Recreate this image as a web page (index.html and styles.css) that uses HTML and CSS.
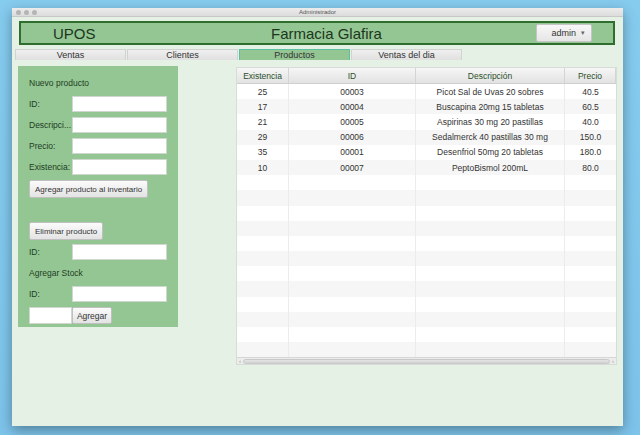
FILE: index.html
```html
<!DOCTYPE html>
<html>
<head>
<meta charset="utf-8">
<link rel="stylesheet" href="styles.css">
</head>
<body>
<div class="window">
  <div class="titlebar">
    <div class="dots"><span></span><span></span><span></span></div>
    <div class="title">Administrador</div>
  </div>
  <div class="content">
    <div class="header">
      <div class="brand">UPOS</div>
      <div class="store">Farmacia Glafira</div>
      <div class="user">admin <span class="caret">▾</span></div>
    </div>
    <div class="tabs">
      <div class="tab">Ventas</div>
      <div class="tab">Clientes</div>
      <div class="tab active">Productos</div>
      <div class="tab">Ventas del dia</div>
    </div>
    <div class="main">
      <div class="panel">
        <div class="section-title">Nuevo producto</div>
        <div class="field first"><span class="label">ID:</span><span class="input"></span></div>
        <div class="field"><span class="label">Descripci...</span><span class="input"></span></div>
        <div class="field"><span class="label">Precio:</span><span class="input"></span></div>
        <div class="field"><span class="label">Existencia:</span><span class="input"></span></div>
        <div class="btn add-btn">Agregar producto al inventario</div>
        <div class="btn del-btn">Eliminar producto</div>
        <div class="field tight"><span class="label">ID:</span><span class="input"></span></div>
        <div class="section-title stock">Agregar Stock</div>
        <div class="field stock-id"><span class="label">ID:</span><span class="input"></span></div>
        <div class="qty-row"><span class="input qty"></span><span class="btn small">Agregar</span></div>
      </div>
      <div class="table-wrap">
        <div class="table">
          <div class="row head"><div>Existencia</div><div>ID</div><div>Descripción</div><div>Precio</div></div>
          <div class="row"><div>25</div><div>00003</div><div>Picot Sal de Uvas 20 sobres</div><div>40.5</div></div>
          <div class="row"><div>17</div><div>00004</div><div>Buscapina 20mg 15 tabletas</div><div>60.5</div></div>
          <div class="row"><div>21</div><div>00005</div><div>Aspirinas 30 mg 20 pastillas</div><div>40.0</div></div>
          <div class="row"><div>29</div><div>00006</div><div>Sedalmerck 40 pastillas 30 mg</div><div>150.0</div></div>
          <div class="row"><div>35</div><div>00001</div><div>Desenfriol 50mg 20 tabletas</div><div>180.0</div></div>
          <div class="row"><div>10</div><div>00007</div><div>PeptoBismol 200mL</div><div>80.0</div></div>
          <div class="row"><div></div><div></div><div></div><div></div></div>
          <div class="row"><div></div><div></div><div></div><div></div></div>
          <div class="row"><div></div><div></div><div></div><div></div></div>
          <div class="row"><div></div><div></div><div></div><div></div></div>
          <div class="row"><div></div><div></div><div></div><div></div></div>
          <div class="row"><div></div><div></div><div></div><div></div></div>
          <div class="row"><div></div><div></div><div></div><div></div></div>
          <div class="row"><div></div><div></div><div></div><div></div></div>
          <div class="row"><div></div><div></div><div></div><div></div></div>
          <div class="row"><div></div><div></div><div></div><div></div></div>
          <div class="row"><div></div><div></div><div></div><div></div></div>
          <div class="row"><div></div><div></div><div></div><div></div></div>
        </div>
        <div class="hscroll"><span class="arr">‹</span><span class="thumb"></span><span class="arr">›</span></div>
      </div>
    </div>
  </div>
</div>
</body>
</html>
```
FILE: styles.css
```css
* { box-sizing: border-box; }
html, body { margin: 0; height: 100%; }
body {
  background: linear-gradient(180deg, #86ccef 0%, #7dc3ea 100%);
  padding: 8px 17px 9px 12px;
  font-family: "Liberation Sans", Arial, sans-serif;
  color: #333;
}
.window {
  width: 611px;
  height: 418px;
  background: #e6f1e6;
  display: flex;
  flex-direction: column;
  box-shadow: 0 4px 12px rgba(0,0,0,0.35);
}
.titlebar {
  height: 9px;
  background: linear-gradient(#ececec, #dcdcdc);
  border-bottom: 1px solid #c8c8c8;
  position: relative;
  display: flex;
  align-items: center;
  justify-content: center;
}
.dots {
  position: absolute;
  left: 4px;
  top: 2px;
  display: flex;
  gap: 3px;
}
.dots span {
  width: 5px; height: 5px; border-radius: 50%;
  background: #b5b5b5;
}
.title { font-size: 6px; color: #555; }
.content {
  flex: 1;
  display: flex;
  flex-direction: column;
  padding: 4px 0 0 3px;
}
.header {
  margin: 0 8px 0 4px;
  height: 24px;
  background: #93c693;
  border: 2px solid #2f6e2f;
  display: flex;
  align-items: center;
  color: #1d351d;
  font-size: 15px;
}
.brand { width: 250px; padding-left: 32px; }
.store { flex: 1; }
.user {
  width: 56px;
  height: 18px;
  margin-right: 21px;
  background: linear-gradient(#f7f7f7, #e6e6e6);
  border: 1px solid #c5c5c5;
  border-radius: 2px;
  font-size: 9px;
  color: #333;
  display: flex;
  align-items: center;
  justify-content: flex-end;
  padding-right: 6px;
  gap: 5px;
}
.caret { font-size: 7px; color: #666; }
.tabs {
  display: flex;
  margin-top: 4px;
  height: 11px;
}
.tab {
  width: 111px;
  margin-right: 1px;
  background: linear-gradient(#efefef, #e0e0e0);
  border: 1px solid #d2d2d2;
  border-bottom: none;
  font-size: 9px;
  color: #333;
  display: flex;
  align-items: center;
  justify-content: center;
  line-height: 1;
}
.tab.active {
  background: #93c693;
  border: 1px solid #5bbfa0;
  border-bottom: none;
}
.main {
  display: flex;
  align-items: flex-start;
  margin-top: 6px;
  padding-left: 3px;
}
.panel {
  width: 160px;
  height: 261px;
  background: #93c693;
  padding: 11px 0 0 11px;
  font-size: 8.5px;
  color: #1f3d1f;
  display: flex;
  flex-direction: column;
}
.section-title { height: 12px; line-height: 12px; }
.field { display: flex; align-items: center; margin-top: 5px; height: 16px; }
.field.first { margin-top: 7px; }
.label { width: 43px; white-space: nowrap; overflow: hidden; }
.input {
  width: 95px; height: 16px;
  background: #fff;
  border: 1px solid #cfd8cf;
  display: inline-block;
}
.btn {
  background: linear-gradient(#fbfbfb, #e3e3e3);
  border: 1px solid #c0c0c0;
  border-radius: 2px;
  color: #333;
  height: 18px;
  display: flex;
  align-items: center;
  justify-content: center;
  align-self: flex-start;
  padding: 0 5px;
  white-space: nowrap;
  font-size: 8px;
}
.add-btn { margin-top: 5px; min-width: 119px; }
.del-btn { margin-top: 24px; min-width: 74px; }
.field.tight { margin-top: 4px; }
.section-title.stock { margin-top: 7px; }
.field.stock-id { margin-top: 7px; }
.qty-row { display: flex; margin-top: 5px; height: 17px; }
.input.qty { width: 43px; height: 17px; }
.btn.small { height: 17px; width: 40px; padding: 0; font-size: 8.5px; }
.table-wrap {
  margin-left: 58px;
  margin-top: 1px;
  width: 381px;
  display: flex;
  flex-direction: column;
  border: 1px solid #d8dcd8;
  background: #fff;
}
.table { display: flex; flex-direction: column; }
.row {
  display: grid;
  grid-template-columns: 52px 127px 149px 1fr;
  height: 15.2px;
  font-size: 8.5px;
  color: #333;
}
.row > div {
  display: flex; align-items: center; justify-content: center;
  border-right: 1px solid #ececec;
  white-space: nowrap;
}
.row > div:last-child { border-right: none; }
.row:nth-child(odd) { background: #f6f6f6; }
.row.head {
  height: 16px;
  background: linear-gradient(#f6f6f6, #e2e2e2);
  border-bottom: 1px solid #cfcfcf;
  color: #2a4f2a;
}
.row.head > div { border-right: 1px solid #d4d4d4; }
.hscroll {
  height: 7px;
  background: #ececec;
  border-top: 1px solid #d6d6d6;
  display: flex;
  align-items: center;
  font-size: 6px;
  color: #999;
}
.arr { width: 6px; text-align: center; line-height: 6px; }
.thumb {
  flex: 1; height: 5px;
  background: linear-gradient(#e4e4e4, #d2d2d2);
  border: 1px solid #c8c8c8;
  border-radius: 3px;
}
```
